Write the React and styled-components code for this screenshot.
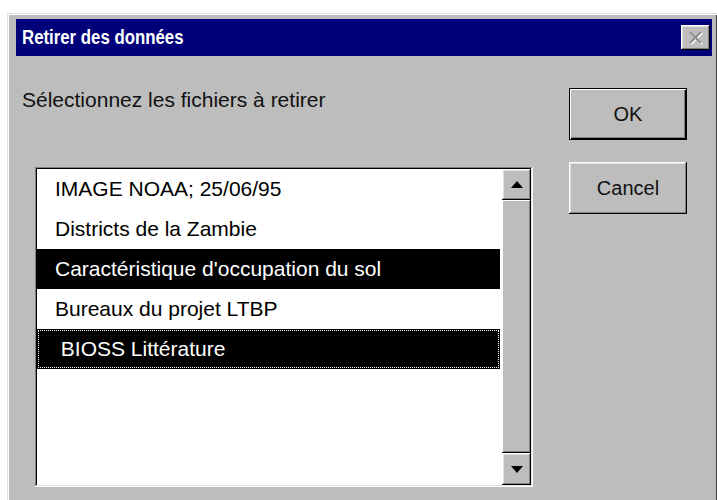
import React from "react";
import styled, { createGlobalStyle } from "styled-components";

const GlobalStyle = createGlobalStyle`
  html, body {
    margin: 0;
    padding: 0;
    background: #fff;
    overflow: hidden;
  }
  body {
    font-family: "Liberation Sans", Arial, sans-serif;
  }
`;

// classic 3D bevels
const raised = `
  box-shadow: inset -1px -1px #000, inset 1px 1px #fff,
    inset -2px -2px #808080, inset 2px 2px #dfdfdf;
`;

const Page = styled.div`
  padding: 13px 0 0 7px;
  height: 500px;
  box-sizing: border-box;
`;

const Dialog = styled.div`
  width: 710px;
  height: 500px;
  box-sizing: border-box;
  background: #bdbdbd;
  padding: 6px 5px 0 9px;
  box-shadow: inset 1px 1px #dfdfdf, inset 2px 2px #fff, inset -1px 0 #404040;
`;

const TitleBar = styled.div`
  height: 37px;
  background: #00007b;
  display: flex;
  align-items: center;
  justify-content: space-between;
  padding: 0 2px 0 6px;
`;

const Title = styled.span`
  display: inline-block;
  color: #fff;
  font-weight: bold;
  font-size: 20px;
  transform: scaleX(0.84);
  transform-origin: left center;
  white-space: nowrap;
`;

const CloseButton = styled.div`
  width: 29px;
  height: 25px;
  background: #bdbdbd;
  display: flex;
  align-items: center;
  justify-content: center;
  ${raised}
`;

const Body = styled.div`
  display: flex;
  padding-top: 32px;
`;

const LeftColumn = styled.div`
  width: 517px;
  display: flex;
  flex-direction: column;
`;

const Label = styled.div`
  padding-left: 6px;
  font-size: 21px;
  line-height: 24px;
  color: #111;
`;

const ListBox = styled.div`
  margin: 55px 0 0 19px;
  width: 498px;
  height: 320px;
  box-sizing: border-box;
  padding: 2px;
  background: #fff;
  display: flex;
  box-shadow: inset -1px -1px #fff, inset 1px 1px #808080,
    inset -2px -2px #dfdfdf, inset 2px 2px #000;
`;

const Rows = styled.div`
  flex: 1;
  display: flex;
  flex-direction: column;
  padding-right: 2px;
`;

const Row = styled.div`
  height: 40px;
  line-height: 40px;
  padding-left: 18px;
  font-size: 21px;
  white-space: pre;
  color: ${(p) => (p.$selected ? "#fff" : "#000")};
  background: ${(p) => (p.$selected ? "#000" : "transparent")};
  outline: ${(p) => (p.$focused ? "1px dotted #fff" : "none")};
  outline-offset: -2px;
`;

const ScrollBar = styled.div`
  width: 29px;
  display: flex;
  flex-direction: column;
  background: #bdbdbd;
`;

const ArrowButton = styled.div`
  height: ${(p) => p.$h}px;
  display: flex;
  align-items: center;
  justify-content: center;
  background: #bdbdbd;
  ${raised}
`;

const Thumb = styled.div`
  flex: 1;
  background: #bdbdbd;
  box-shadow: inset -1px -1px #000, inset 1px 1px #fff, inset -2px -2px #808080;
`;

const RightColumn = styled.div`
  margin-left: 36px;
  display: flex;
  flex-direction: column;
  gap: 22px;
`;

const Button = styled.div`
  width: 118px;
  height: 52px;
  display: flex;
  align-items: center;
  justify-content: center;
  font-size: 20px;
  color: #111;
  background: #bdbdbd;
  box-shadow: ${(p) =>
    p.$default
      ? "inset 0 0 0 1px #000, inset 2px 2px #fff, inset -2px -2px #000, inset -3px -3px #808080"
      : "inset -1px -1px #000, inset 1px 1px #fff, inset -2px -2px #808080, inset 2px 2px #dfdfdf"};
`;

const Arrow = ({ up }) => (
  <svg width="12" height="7" viewBox="0 0 12 7">
    <polygon points={up ? "6,0 12,7 0,7" : "0,0 12,0 6,7"} fill="#000" />
  </svg>
);

const CloseIcon = () => (
  <svg width="16" height="14" viewBox="0 0 16 14">
    <path d="M3 2 L14 13 M14 2 L3 13" stroke="#fff" strokeWidth="2" />
    <path d="M2 1 L13 12 M13 1 L2 12" stroke="#8c8c8c" strokeWidth="2" />
  </svg>
);

const files = [
  { name: "IMAGE NOAA; 25/06/95" },
  { name: "Districts de la Zambie" },
  { name: "Caractéristique d'occupation du sol", selected: true },
  { name: "Bureaux du projet LTBP" },
  { name: " BIOSS Littérature", selected: true, focused: true },
];

export default function App() {
  return (
    <>
      <GlobalStyle />
      <Page>
        <Dialog>
          <TitleBar>
            <Title>Retirer des données</Title>
            <CloseButton>
              <CloseIcon />
            </CloseButton>
          </TitleBar>
          <Body>
            <LeftColumn>
              <Label>Sélectionnez les fichiers à retirer</Label>
              <ListBox>
                <Rows>
                  {files.map((f) => (
                    <Row key={f.name} $selected={f.selected} $focused={f.focused}>
                      {f.name}
                    </Row>
                  ))}
                </Rows>
                <ScrollBar>
                  <ArrowButton $h={31}>
                    <Arrow up />
                  </ArrowButton>
                  <Thumb />
                  <ArrowButton $h={32}>
                    <Arrow />
                  </ArrowButton>
                </ScrollBar>
              </ListBox>
            </LeftColumn>
            <RightColumn>
              <Button $default>OK</Button>
              <Button>Cancel</Button>
            </RightColumn>
          </Body>
        </Dialog>
      </Page>
    </>
  );
}
